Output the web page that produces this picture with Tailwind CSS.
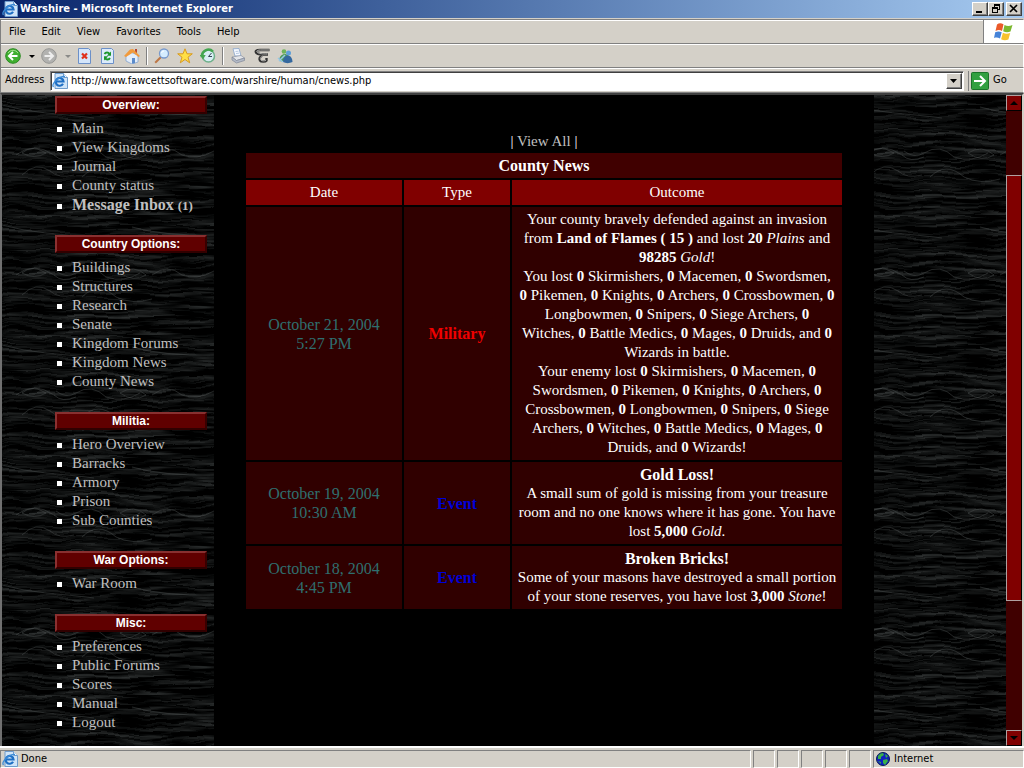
<!DOCTYPE html>
<html lang="en">
<head>
  <meta charset="UTF-8">
  <meta name="viewport" content="width=device-width, initial-scale=1">
  <title>Warshire - Microsoft Internet Explorer</title>
  <script src="https://cdn.jsdelivr.net/npm/@tailwindcss/browser@4"></script>
  <style>
    .ui { font-family: 'DejaVu Sans Condensed', 'Noto Sans', sans-serif; }
    .page { font-family: 'Liberation Serif', serif; }
    .raised { border: 1px solid; border-color: #fff #404040 #404040 #fff; box-shadow: inset -1px -1px #808080; }
  </style>
</head>
<body class="h-screen overflow-hidden bg-[#d4d0c8]">
  <!-- shared drawings -->
  <svg class="hidden">
    <symbol id="ie" viewBox="0 0 16 16">
      <path d="M3 .5h8.500l4 4v11H3z" fill="#cfe4f8" stroke="#6f9ccc"/>
      <path d="M11.500 .5v4h4" fill="#fff" stroke="#6f9ccc"/>
      <path d="M11 10.800A3.900 3.900 0 1 1 11.500 8.500H4" fill="none" stroke="#1f6fc4" stroke-width="2.200"/>
      <path d="M1.500 14C-1 11 7 3 13 3.500" fill="none" stroke="#3c8cd8" stroke-width="1.300"/>
    </symbol>
  </svg>

  <div class="flex h-full flex-col">
    <!-- title bar -->
    <header class="ui flex h-[18px] shrink-0 items-center bg-linear-to-r from-[#0a246a] to-[#a6caf0] pr-[2px] pl-[2px]">
      <svg class="size-4"><use href="#ie"/></svg>
      <h1 class="ml-[2px] flex-1 text-[11px] font-bold text-white">Warshire - Microsoft Internet Explorer</h1>
      <button aria-label="Minimize" class="raised h-[14px] w-4 bg-[#d4d0c8]"><svg class="block h-3 w-[14px]" viewBox="0 0 14 12"><path d="M3 8h6v2H3z"/></svg></button>
      <button aria-label="Restore" class="raised h-[14px] w-4 bg-[#d4d0c8]"><svg class="block h-3 w-[14px]" viewBox="0 0 14 12" shape-rendering="crispEdges"><path d="M5 1h6v6H9V6h1V3H6v1H5zM3 4h6v6H3zM4 6v3h4V6z" fill-rule="evenodd"/></svg></button>
      <button aria-label="Close" class="raised ml-[2px] h-[14px] w-4 bg-[#d4d0c8]"><svg class="block h-3 w-[14px]" viewBox="0 0 14 12"><path d="M3 2l7 7M10 2L3 9" stroke="#000" stroke-width="1.700"/></svg></button>
    </header>

    <!-- menu bar -->
    <div class="mt-[1px] flex h-[25px] shrink-0 border border-[#808080] border-r-white shadow-[inset_0_1px_#fff]">
      <nav class="ui flex flex-1 items-center gap-4 pt-[2px] pl-2 text-[11px] text-black">
        <button>File</button>
        <button>Edit</button>
        <button>View</button>
        <button>Favorites</button>
        <button>Tools</button>
        <button>Help</button>
      </nav>
      <div class="flex w-[40px] items-center justify-center border-l border-[#808080] bg-white">
        <svg class="h-5 w-5" viewBox="0 0 20 20">
          <path d="M3 2.500c2-1.500 4-1.500 6.500-.2L8 9C6 7.800 4 7.800 1.500 9z" fill="#ea5a2a"/>
          <path d="M10.500 3c2.500 1.200 5 1.200 8 0l-2 6.500c-2.500 1.200-5 1-7.300-.2z" fill="#7cb82f"/>
          <path d="M1.200 10.200c2.500-1.200 4.500-1 6.500.1L6 16.500C4 15.300 2 15.300 0 16z" fill="#4583d8"/>
          <path d="M8.900 10.800c2.400 1.200 4.700 1.400 7.300.2l-1.800 6.500c-2.500 1-4.900 1-7.300-.3z" fill="#f8c22c"/>
        </svg>
      </div>
    </div>

    <!-- toolbar -->
    <div class="flex h-6 shrink-0 items-center border-x border-b border-[#808080] border-r-white pl-1 shadow-[inset_0_1px_#fff]">
      <button aria-label="Back"><svg class="block size-4" viewBox="0 0 16 16"><circle cx="8" cy="8" r="7.300" fill="#3fae2f" stroke="#2b8a22"/><path d="M3 5a6 6 0 0 1 10 0" stroke="#a4e08e" fill="none"/><path d="M12.500 8H4.500M8 4L4 8l4 4" fill="none" stroke="#fff" stroke-width="2"/></svg></button>
      <button aria-label="Back history" class="ml-2"><svg class="block h-4 w-[6px]"><path d="M0 7h6l-3 3z"/></svg></button>
      <button aria-label="Forward" class="ml-[6px]"><svg class="block size-4" viewBox="0 0 16 16"><circle cx="8" cy="8" r="7.300" fill="#b2b2b0" stroke="#969694"/><path d="M3.500 8h8M8 4l4 4-4 4" fill="none" stroke="#eee" stroke-width="2"/></svg></button>
      <button aria-label="Forward history" class="ml-2"><svg class="block h-4 w-[6px]"><path d="M0 7h6l-3 3z" fill="#8a8a88"/></svg></button>
      <button aria-label="Stop" class="ml-[6px]"><svg class="block size-4" viewBox="0 0 16 16"><path d="M1.500 .5h10l2 2v13h-12z" fill="#d4e5fa" stroke="#6c90c8"/><path d="M5 5.500l5 5M10 5.500l-5 5" stroke="#e0301c" stroke-width="2.200"/></svg></button>
      <button aria-label="Refresh" class="ml-[7px]"><svg class="block size-4" viewBox="0 0 16 16"><path d="M1.500 .5h10l2 2v13h-12z" fill="#dcebfa" stroke="#6c90c8"/><path d="M4.500 6c1-2 4-2 5 0M10 10c-1 2-4 2-5 0" fill="none" stroke="#1c962c" stroke-width="1.800"/><path d="M11 3.500v4.300H6.800zM4 12.500V8.200h4.200z" fill="#1c962c"/></svg></button>
      <button aria-label="Home" class="ml-2"><svg class="block size-4" viewBox="0 0 16 16"><path d="M11 1h2v4h-2z" fill="#b84a30"/><path d="M2 8l4-4 8 3v7l-6 2-6-3z" fill="#e3edf9" stroke="#789bcb" stroke-width=".7"/><path d="M0 8L6 1.500 9 1l7 7-1.500 1L9 4.500 2 9z" fill="#f19a3c"/><path d="M8 10h3v5l-3 .8z" fill="#5b8bca"/></svg></button>
      <span class="mx-[6px] h-[18px] w-[2px] border-l border-[#808080] bg-white"></span>
      <button aria-label="Search"><svg class="block size-4" viewBox="0 0 16 16"><path d="M7 9L1.200 14.800" stroke="#bd7746" stroke-width="2"/><circle cx="10" cy="5.500" r="4.500" fill="#d5edff" stroke="#7899cc" stroke-width="1.300"/><path d="M7.500 5Q8 3 10 3" fill="none" stroke="#fff"/></svg></button>
      <button aria-label="Favorites" class="ml-[7px]"><svg class="block size-4" viewBox="0 0 16 16"><path d="M8 .8l2 5h5.300L11 9.200l1.700 5.600L8 11.500l-4.700 3.300L5 9.200.7 5.800H6z" fill="#ffdf45" stroke="#d89a20"/></svg></button>
      <button aria-label="History" class="ml-[7px]"><svg class="block size-4" viewBox="0 0 16 16"><circle cx="8.500" cy="8" r="6" fill="#d8eef4" stroke="#6eb08a" stroke-width="1.500"/><path d="M2 9a6.500 6.500 0 0 1 11-5.500" fill="none" stroke="#43a650" stroke-width="2.400"/><path d="M-.3 7h6L3 11.500z" fill="#43a650"/><path d="M11.500 5L8.500 8.500h3.500" fill="none" stroke="#345"/></svg></button>
      <span class="mx-[6px] h-[18px] w-[2px] border-l border-[#808080] bg-white"></span>
      <button aria-label="Print"><svg class="block size-4" viewBox="0 0 16 16"><path d="M3 .8l6-.3 2 7.500H5z" fill="#f5f9ff" stroke="#88a5cc" stroke-width=".8"/><path d="M2 9l9-1.500 3.500 2.500-8 2.500z" fill="#e4e6ea" stroke="#8c94a2" stroke-width=".7"/><path d="M2 9v3l4.500 3 8-2.500V10l-8 2.500z" fill="#b4bbc8" stroke="#7f8797" stroke-width=".7"/><path d="M5.500 3.500l3-.3M6 5.500l3-.3" stroke="#a8bcd8" stroke-width=".8"/></svg></button>
      <button aria-label="Edit" class="ml-2"><svg class="block size-4" viewBox="0 0 16 16"><path d="M15.500 2H6C2 2 .8 3.500 2.500 5S6 6.500 14 6.500M8 7.500C5.500 9 5 11 6 12.500c1 1.500 5.500 1.500 6.500 0V10" fill="none" stroke="#333" stroke-width="2.400"/><path d="M15 2H6.500C3 2 2 3.500 3.500 4.500S8 6 13.500 6M8.500 8C6 9.500 6 11 7 12.200c1 .8 3.500 1 5 0" fill="none" stroke="#b0b0ae"/></svg></button>
      <button aria-label="Messenger" class="ml-[7px]"><svg class="block size-4" viewBox="0 0 16 16"><circle cx="7" cy="3.500" r="2.300" fill="#6fb35b"/><path d="M2 13c0-8 9-9 10-4l-3 5z" fill="#4c9956"/><circle cx="11.500" cy="5" r="2.500" fill="#5f9fd8"/><path d="M6 14c0-8 9-9 9.500 0-3 1.500-7 1.500-9.500 0z" fill="#34689f"/><path d="M1 10l5 4M2 13l6-6" stroke="#95c7e8" stroke-width="1.500"/></svg></button>
    </div>

    <!-- address bar -->
    <form class="ui flex h-[25px] shrink-0 items-center border-x border-b border-[#808080] border-r-white pt-px pl-1 text-[11px] text-black shadow-[inset_0_1px_#fff]">
      <label for="address" class="w-[45px]">Address</label>
      <div class="flex h-5 flex-1 items-center border border-[#808080] border-r-white border-b-white bg-white p-px shadow-[inset_1px_1px_#404040]">
        <svg class="size-4"><use href="#ie"/></svg>
        <input id="address" type="text" value="http://www.fawcettsoftware.com/warshire/human/cnews.php" class="ml-[3px] flex-1 pt-[2px] outline-none">
        <button type="button" aria-label="Show addresses" class="raised h-4 w-4 bg-[#d4d0c8]"><svg class="block size-[14px]"><path d="M3 5h7l-3.500 4z"/></svg></button>
      </div>
      <button type="button" class="ml-1 flex h-5 w-[55px] items-center gap-1 border-l border-[#808080] pl-[2px]">
        <svg class="h-[18px] w-[18px]" viewBox="0 0 18 18"><rect x=".5" y=".5" width="17" height="17" rx="1" fill="#32a040" stroke="#1b7329"/><path d="M3 9h11M9 4l5 5-5 5" fill="none" stroke="#fff" stroke-width="2"/></svg>
        Go
      </button>
    </form>

    <!-- page -->
    <div class="page relative isolate flex min-h-0 flex-1 overflow-hidden border-t-2 border-r-2 border-l-2 border-t-[#404040] border-r-[#d4d0c8] border-l-[#707070] bg-black text-[15px] leading-[19px] text-white">
      <!-- wood grain, a 212x120 tile -->
      <svg class="absolute inset-0 -z-10 h-full w-full" aria-hidden="true">
        <defs>
          <filter id="grain" x="-20%" y="-20%" width="140%" height="140%" color-interpolation-filters="sRGB">
            <feTurbulence type="fractalNoise" baseFrequency="0.018 0.28" numOctaves="3" seed="8" result="lines"/>
            <feTurbulence type="fractalNoise" baseFrequency="0.03 0.035" numOctaves="2" seed="3" result="warp"/>
            <feDisplacementMap in="lines" in2="warp" scale="9" xChannelSelector="R" yChannelSelector="G"/>
            <feColorMatrix values=".42 0 0 0 -.175  .44 0 0 0 -.18  .44 0 0 0 -.18  0 0 0 0 1"/>
          </filter>
          <pattern id="wood" width="212" height="120" patternUnits="userSpaceOnUse">
            <rect width="212" height="120" filter="url(#grain)"/>
            <g fill="none" stroke="#555a5a" stroke-opacity=".4">
              <path d="M20 58q10-9 24 0q-11 7-24 0M14 60q18-14 38 0q8 8 22 2M54 56q10 8 20 2q16-10 30 4q18 6 34-4M118 58q14-9 26 2q-12 8-26-2M150 60q16-12 30 0q14 6 32-4M20 80q14-14 28-4q9 8 24 4M80 82q16-16 34 0q16 8 36 2M0 10q22 6 44 8q24 2 48 5M130 12q30 9 82 8"/>
            </g>
          </pattern>
        </defs>
        <rect width="100%" height="100%" fill="url(#wood)"/>
      </svg>

      <aside class="w-[212px] shrink-0 pl-[53px]">
        <h2 class="mt-px mb-[5px] flex h-[18px] w-[152px] items-center justify-center border-2 border-t-[#883030] border-r-[#380000] border-b-[#300000] border-l-[#8c3030] bg-[#600000] font-['Liberation_Sans'] text-xs font-bold">Overview:</h2>
        <ul class="list-none pb-5 text-[#c0c0c0]">
          <li class="flex items-center gap-[10px] pl-[2px]"><i class="mt-[2px] size-[5px] bg-white"></i><a href="#">Main</a></li>
          <li class="flex items-center gap-[10px] pl-[2px]"><i class="mt-[2px] size-[5px] bg-white"></i><a href="#">View Kingdoms</a></li>
          <li class="flex items-center gap-[10px] pl-[2px]"><i class="mt-[2px] size-[5px] bg-white"></i><a href="#">Journal</a></li>
          <li class="flex items-center gap-[10px] pl-[2px]"><i class="mt-[2px] size-[5px] bg-white"></i><a href="#">County status</a></li>
          <li class="flex items-center gap-[10px] pl-[2px]"><i class="mt-[2px] size-[5px] bg-white"></i><a href="#" class="text-base leading-[19px] font-bold">Message Inbox <span class="text-[13px]">(1)</span></a></li>
        </ul>
        <h2 class="mb-[5px] flex h-[18px] w-[152px] items-center justify-center border-2 border-t-[#883030] border-r-[#380000] border-b-[#300000] border-l-[#8c3030] bg-[#600000] font-['Liberation_Sans'] text-xs font-bold">Country Options:</h2>
        <ul class="list-none pb-[21px] text-[#c0c0c0]">
          <li class="flex items-center gap-[10px] pl-[2px]"><i class="mt-[2px] size-[5px] bg-white"></i><a href="#">Buildings</a></li>
          <li class="flex items-center gap-[10px] pl-[2px]"><i class="mt-[2px] size-[5px] bg-white"></i><a href="#">Structures</a></li>
          <li class="flex items-center gap-[10px] pl-[2px]"><i class="mt-[2px] size-[5px] bg-white"></i><a href="#">Research</a></li>
          <li class="flex items-center gap-[10px] pl-[2px]"><i class="mt-[2px] size-[5px] bg-white"></i><a href="#">Senate</a></li>
          <li class="flex items-center gap-[10px] pl-[2px]"><i class="mt-[2px] size-[5px] bg-white"></i><a href="#">Kingdom Forums</a></li>
          <li class="flex items-center gap-[10px] pl-[2px]"><i class="mt-[2px] size-[5px] bg-white"></i><a href="#">Kingdom News</a></li>
          <li class="flex items-center gap-[10px] pl-[2px]"><i class="mt-[2px] size-[5px] bg-white"></i><a href="#">County News</a></li>
        </ul>
        <h2 class="mb-[5px] flex h-[18px] w-[152px] items-center justify-center border-2 border-t-[#883030] border-r-[#380000] border-b-[#300000] border-l-[#8c3030] bg-[#600000] font-['Liberation_Sans'] text-xs font-bold">Militia:</h2>
        <ul class="list-none pb-[21px] text-[#c0c0c0]">
          <li class="flex items-center gap-[10px] pl-[2px]"><i class="mt-[2px] size-[5px] bg-white"></i><a href="#">Hero Overview</a></li>
          <li class="flex items-center gap-[10px] pl-[2px]"><i class="mt-[2px] size-[5px] bg-white"></i><a href="#">Barracks</a></li>
          <li class="flex items-center gap-[10px] pl-[2px]"><i class="mt-[2px] size-[5px] bg-white"></i><a href="#">Armory</a></li>
          <li class="flex items-center gap-[10px] pl-[2px]"><i class="mt-[2px] size-[5px] bg-white"></i><a href="#">Prison</a></li>
          <li class="flex items-center gap-[10px] pl-[2px]"><i class="mt-[2px] size-[5px] bg-white"></i><a href="#">Sub Counties</a></li>
        </ul>
        <h2 class="mb-[5px] flex h-[18px] w-[152px] items-center justify-center border-2 border-t-[#883030] border-r-[#380000] border-b-[#300000] border-l-[#8c3030] bg-[#600000] font-['Liberation_Sans'] text-xs font-bold">War Options:</h2>
        <ul class="list-none pb-[21px] text-[#c0c0c0]">
          <li class="flex items-center gap-[10px] pl-[2px]"><i class="mt-[2px] size-[5px] bg-white"></i><a href="#">War Room</a></li>
        </ul>
        <h2 class="mb-[5px] flex h-[18px] w-[152px] items-center justify-center border-2 border-t-[#883030] border-r-[#380000] border-b-[#300000] border-l-[#8c3030] bg-[#600000] font-['Liberation_Sans'] text-xs font-bold">Misc:</h2>
        <ul class="list-none text-[#c0c0c0]">
          <li class="flex items-center gap-[10px] pl-[2px]"><i class="mt-[2px] size-[5px] bg-white"></i><a href="#">Preferences</a></li>
          <li class="flex items-center gap-[10px] pl-[2px]"><i class="mt-[2px] size-[5px] bg-white"></i><a href="#">Public Forums</a></li>
          <li class="flex items-center gap-[10px] pl-[2px]"><i class="mt-[2px] size-[5px] bg-white"></i><a href="#">Scores</a></li>
          <li class="flex items-center gap-[10px] pl-[2px]"><i class="mt-[2px] size-[5px] bg-white"></i><a href="#">Manual</a></li>
          <li class="flex items-center gap-[10px] pl-[2px]"><i class="mt-[2px] size-[5px] bg-white"></i><a href="#">Logout</a></li>
        </ul>
      </aside>

      <main class="flex-1 bg-black px-[30px] pt-[37px] text-center">
        <p>| <a href="#" class="text-[#c0c0c0]">View All</a> |</p>
        <table class="w-full table-fixed border-separate border-spacing-[2px]">
          <colgroup>
            <col class="w-[156px]">
            <col class="w-[106px]">
            <col>
          </colgroup>
          <thead>
            <tr><th colspan="3" class="bg-[#400000] p-[3px] text-base leading-[19px]">County News</th></tr>
            <tr class="bg-[#800000]">
              <th class="p-[3px] font-normal">Date</th>
              <th class="p-[3px] font-normal">Type</th>
              <th class="p-[3px] font-normal">Outcome</th>
            </tr>
          </thead>
          <tbody class="bg-[#300000]">
            <tr>
              <td class="p-[3px] text-base leading-[19px] text-[#2f6f6f]">October 21, 2004<br>5:27 PM</td>
              <td class="p-[3px] text-base leading-[19px] font-bold text-[#f00000]">Military</td>
              <td class="p-[3px]">
                Your county bravely defended against an invasion<br>
                from <b>Land of Flames ( 15 )</b> and lost <b>20</b> <i>Plains</i> and<br>
                <b>98285</b> <i>Gold</i>!<br>
                You lost <b>0</b> Skirmishers, <b>0</b> Macemen, <b>0</b> Swordsmen,<br>
                <b>0</b> Pikemen, <b>0</b> Knights, <b>0</b> Archers, <b>0</b> Crossbowmen, <b>0</b><br>
                Longbowmen, <b>0</b> Snipers, <b>0</b> Siege Archers, <b>0</b><br>
                Witches, <b>0</b> Battle Medics, <b>0</b> Mages, <b>0</b> Druids, and <b>0</b><br>
                Wizards in battle.<br>
                Your enemy lost <b>0</b> Skirmishers, <b>0</b> Macemen, <b>0</b><br>
                Swordsmen, <b>0</b> Pikemen, <b>0</b> Knights, <b>0</b> Archers, <b>0</b><br>
                Crossbowmen, <b>0</b> Longbowmen, <b>0</b> Snipers, <b>0</b> Siege<br>
                Archers, <b>0</b> Witches, <b>0</b> Battle Medics, <b>0</b> Mages, <b>0</b><br>
                Druids, and <b>0</b> Wizards!
              </td>
            </tr>
            <tr>
              <td class="p-[3px] text-base leading-[19px] text-[#2f6f6f]">October 19, 2004<br>10:30 AM</td>
              <td class="p-[3px] text-base leading-[19px] font-bold text-[#0000d8]">Event</td>
              <td class="p-[3px]">
                <b class="block text-base leading-[19px]">Gold Loss!</b>
                A small sum of gold is missing from your treasure<br>
                room and no one knows where it has gone. You have<br>
                lost <b>5,000</b> <i>Gold</i>.
              </td>
            </tr>
            <tr>
              <td class="p-[3px] text-base leading-[19px] text-[#2f6f6f]">October 18, 2004<br>4:45 PM</td>
              <td class="p-[3px] text-base leading-[19px] font-bold text-[#0000d8]">Event</td>
              <td class="p-[3px]">
                <b class="block text-base leading-[19px]">Broken Bricks!</b>
                Some of your masons have destroyed a small portion<br>
                of your stone reserves, you have lost <b>3,000</b> <i>Stone</i>!
              </td>
            </tr>
          </tbody>
        </table>
      </main>

      <div class="w-[132px] shrink-0"></div>

      <!-- scrollbar -->
      <div class="flex w-4 shrink-0 flex-col bg-[#400000]">
        <button aria-label="Scroll up" class="h-4 border border-[#b0a0a0] border-r-black border-b-black bg-[#800000]"><svg class="block size-[14px]"><path d="M3 9h8L7 5z"/></svg></button>
        <div class="flex-[64]"></div>
        <div class="flex-[426] border border-[#b0a0a0] border-r-black bg-[#800000]"></div>
        <div class="flex-[130]"></div>
        <button aria-label="Scroll down" class="h-4 border border-[#b0a0a0] border-r-black border-b-black bg-[#800000]"><svg class="block size-[14px]"><path d="M3 5h8L7 9z"/></svg></button>
      </div>
    </div>

    <!-- status bar -->
    <footer class="ui flex h-[22px] shrink-0 gap-[2px] border-t-2 border-white pt-[2px] text-[11px] text-black">
      <div class="flex flex-1 items-center gap-[3px] border border-[#808080] border-r-white border-b-white pl-px"><svg class="size-4"><use href="#ie"/></svg>Done</div>
      <div class="w-[22px] border border-[#808080] border-r-white border-b-white"></div>
      <div class="w-[22px] border border-[#808080] border-r-white border-b-white"></div>
      <div class="w-[22px] border border-[#808080] border-r-white border-b-white"></div>
      <div class="w-[22px] border border-[#808080] border-r-white border-b-white"></div>
      <div class="w-[22px] border border-[#808080] border-r-white border-b-white"></div>
      <div class="flex w-[151px] items-center gap-1 border border-[#808080] border-r-white border-b-white pl-[2px]">
        <svg class="size-[14px]" viewBox="0 0 14 14"><circle cx="7" cy="7" r="6.500" fill="#1020c0" stroke="#082050"/><path d="M2 4q2-3 5-3l1 2-3 2v2L2 7zM9 2l3 2-2 2zM7 8l4-1 1 2-3 4-2-2zM2 9l3 1v2z" fill="#38b048"/></svg>
        Internet
      </div>
    </footer>
  </div>
</body>
</html>
